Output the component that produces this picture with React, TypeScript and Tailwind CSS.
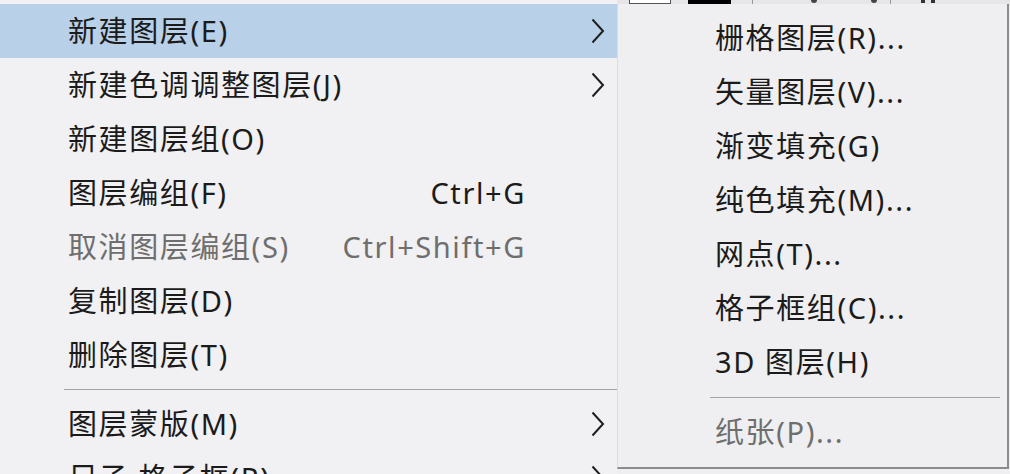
const Chevron = () => (
    <svg width="16" height="26" viewBox="0 0 16 26" className="block">
        <path d="M2.5 1.5 L13 13 L2.5 24.5" fill="none" stroke="#1e1e1e" strokeWidth="2" />
    </svg>
);

type Item = { label: string; shortcut?: string; sub?: boolean; active?: boolean; disabled?: boolean };

const mainItems: (Item | "sep")[] = [
    { label: "新建图层(E)", sub: true, active: true },
    { label: "新建色调调整图层(J)", sub: true },
    { label: "新建图层组(O)" },
    { label: "图层编组(F)", shortcut: "Ctrl+G" },
    { label: "取消图层编组(S)", shortcut: "Ctrl+Shift+G", disabled: true },
    { label: "复制图层(D)" },
    { label: "删除图层(T)" },
    "sep",
    { label: "图层蒙版(M)", sub: true },
    { label: "尺子·格子框(R)", sub: true },
];

const subItems: (Item | "sep")[] = [
    { label: "栅格图层(R)..." },
    { label: "矢量图层(V)..." },
    { label: "渐变填充(G)" },
    { label: "纯色填充(M)..." },
    { label: "网点(T)..." },
    { label: "格子框组(C)..." },
    { label: "3D 图层(H)" },
    "sep",
    { label: "纸张(P)...", disabled: true },
];

const MainRow = ({ item }: { item: Item }) => (
    <div className={`h-[54px] shrink-0 flex items-center pl-[68px] ${item.active ? "bg-[#b9d0e9]" : ""}`}>
        <span className={`flex-1 whitespace-nowrap ${item.disabled ? "text-[#6e6e6e]" : "text-[#1b1b1b]"}`}>{item.label}</span>
        {item.shortcut && (
            <span className={`whitespace-nowrap ${item.disabled ? "text-[#6e6e6e]" : "text-[#1b1b1b]"}`}>{item.shortcut}</span>
        )}
        <span className="w-[91px] pl-[64px] flex items-center">{item.sub && <Chevron />}</span>
    </div>
);

const App = () => {
    return (
        <div
            className="relative w-[1010px] h-[474px] overflow-hidden bg-[#efeef0] text-[29px] tracking-[1.6px]"
            style={{ fontFamily: "'Noto Sans', 'Noto Sans CJK SC', sans-serif" }}
        >
            {/* left menu */}
            <div className="flex flex-col w-[617px] pt-[4px] bg-[#f1f0f2]">
                {mainItems.map((item, i) =>
                    item === "sep" ? (
                        <div key={i} className="h-[15px] shrink-0 pt-[7px] pl-[64px]">
                            <div className="h-px bg-[#a3a3a3]" />
                        </div>
                    ) : (
                        <MainRow key={i} item={item} />
                    )
                )}
            </div>

            {/* toolbar strip behind the submenu */}
            <div className="absolute top-0 left-[617px] right-0 h-[5px] bg-[#e6e6e6] flex items-start">
                <div className="ml-[12px] w-[42px] h-[4px] bg-white border border-t-0 border-[#555]" />
                <div className="ml-[17px] w-[43px] h-[4px] bg-black" />
                <div className="ml-[21px] w-px h-[4px] bg-[#999]" />
                <div className="ml-[58px] w-[6px] h-[3px] rounded-b-full bg-[#444]" />
                <div className="ml-[54px] w-[6px] h-[3px] rounded-b-full bg-[#444]" />
                <div className="ml-[13px] w-px h-[4px] bg-[#999]" />
                <div className="ml-[30px] w-[4px] h-[3px] bg-[#333]" />
                <div className="ml-[6px] w-[4px] h-[3px] bg-[#333]" />
            </div>

            {/* submenu */}
            <div className="absolute left-[617px] top-[4px] w-[392px] h-[465px] flex flex-col pt-[7px] bg-[#efeef0] border-l border-l-[#dcdcdc] border-r-2 border-b-2 border-r-[#8c8c8c] border-b-[#8c8c8c]">
                {subItems.map((item, i) =>
                    item === "sep" ? (
                        <div key={i} className="h-[16px] shrink-0 pt-[8px] pl-[92px] pr-[7px]">
                            <div className="h-px bg-[#a3a3a3]" />
                        </div>
                    ) : (
                        <div key={i} className="h-[54px] shrink-0 flex items-center pl-[97px]">
                            <span className={`whitespace-nowrap ${item.disabled ? "text-[#6e6e6e]" : "text-[#1b1b1b]"}`}>{item.label}</span>
                        </div>
                    )
                )}
            </div>
        </div>
    );
};

export default App;
